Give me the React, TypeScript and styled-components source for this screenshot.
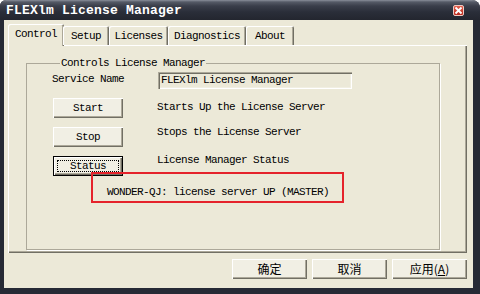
import React from "react";
import styled, { createGlobalStyle } from "styled-components";

const GlobalStyle = createGlobalStyle`
  html, body {
    margin: 0;
    padding: 0;
    width: 480px;
    height: 294px;
    overflow: hidden;
    background: #ffffff;
  }
  #root {
    width: 480px;
    height: 294px;
  }
`;

const MONO = `"Liberation Mono", "DejaVu Sans Mono", monospace`;
const CJK = `"Noto Sans CJK SC", "Noto Sans", sans-serif`;

const TABS = [
  { label: "Control", width: 56 },
  { label: "Setup", width: 46 },
  { label: "Licenses", width: 59 },
  { label: "Diagnostics", width: 78 },
  { label: "About", width: 48 },
];

const CONTROLS = [
  { button: "Start", text: "Starts Up the License Server", offset: 3 },
  { button: "Stop", text: "Stops the License Server", offset: -1 },
  { button: "Status", text: "License Manager Status", offset: -2, isDefault: true },
];

export default function App() {
  return (
    <>
      <GlobalStyle />
      <Window>
        <TitleBar>
          <Title>FLEXlm License Manager</Title>
          <CloseButton>
            <svg width="9" height="9" viewBox="0 0 9 9">
              <path d="M1.5 1.5 L7.5 7.5 M7.5 1.5 L1.5 7.5" stroke="#fff" strokeWidth="1.8" />
            </svg>
          </CloseButton>
        </TitleBar>
        <Body>
          <TabStrip>
            {TABS.map((t, i) => (
              <Tab key={t.label} $active={i === 0} style={{ width: t.width }}>
                {t.label}
              </Tab>
            ))}
          </TabStrip>
          <TabPanel>
            <GroupBox>
              <Legend>Controls License Manager</Legend>
              <ControlGrid>
                <FieldLabel>Service Name</FieldLabel>
                <TextBox>FLEXlm License Manager</TextBox>
                {CONTROLS.map((c) => (
                  <React.Fragment key={c.button}>
                    <PushButton $default={c.isDefault}>
                      {c.isDefault ? <FocusRing>{c.button}</FocusRing> : c.button}
                    </PushButton>
                    <Description $offset={c.offset}>{c.text}</Description>
                  </React.Fragment>
                ))}
              </ControlGrid>
              <StatusNote>WONDER-QJ: license server UP (MASTER)</StatusNote>
            </GroupBox>
          </TabPanel>
          <DialogButtons>
            <DialogButton>确定</DialogButton>
            <DialogButton>取消</DialogButton>
            <DialogButton>
              应用(<u>A</u>)
            </DialogButton>
          </DialogButtons>
        </Body>
      </Window>
    </>
  );
}

const Window = styled.div`
  width: 480px;
  height: 294px;
  box-sizing: border-box;
  display: flex;
  flex-direction: column;
  background: #262a35;
  border-radius: 6px 8px 0 0;
  overflow: hidden;
`;

const TitleBar = styled.div`
  height: 20px;
  flex: none;
  display: flex;
  align-items: center;
  justify-content: space-between;
  padding: 0 16px 0 6px;
  background: linear-gradient(#8a8f9a 0, #555a66 2px, #3a3e4a 6px, #2a2e39 12px, #23262f 20px);
`;

const Title = styled.div`
  font-family: ${MONO};
  font-weight: bold;
  font-size: 13px;
  letter-spacing: 0.2px;
  color: #ffffff;
  margin-top: 1px;
`;

const CloseButton = styled.div`
  width: 11px;
  height: 11px;
  margin-top: 1px;
  box-sizing: border-box;
  border: 1px solid #f0c8c0;
  border-radius: 2px;
  background: linear-gradient(#e2604e, #b8261a);
  display: flex;
  align-items: center;
  justify-content: center;
`;

const Body = styled.div`
  flex: 1;
  margin: 0 7px 6px 4px;
  padding: 4px 6px 0 4px;
  background: #ece9d8;
  display: flex;
  flex-direction: column;
  font-family: ${MONO};
  font-size: 11px;
  letter-spacing: -0.6px;
  color: #000;
`;

const TabStrip = styled.div`
  height: 21px;
  display: flex;
  align-items: flex-end;
  padding-left: 2px;
  position: relative;
  z-index: 1;
`;

const Tab = styled.div<{ $active?: boolean }>`
  box-sizing: border-box;
  height: ${(p) => (p.$active ? 22 : 19)}px;
  margin-bottom: ${(p) => (p.$active ? -1 : 0)}px;
  margin-left: ${(p) => (p.$active ? -2 : 0)}px;
  margin-right: ${(p) => (p.$active ? -1 : 0)}px;
  display: flex;
  align-items: center;
  justify-content: center;
  padding-bottom: ${(p) => (p.$active ? 2 : 0)}px;
  background: #ece9d8;
  border-radius: 2px 2px 0 0;
  box-shadow: inset 1px 1px #ffffff, inset -1px 0 #716f64, inset -2px 0 #aca899;
`;

const TabPanel = styled.div`
  height: 208px;
  box-sizing: border-box;
  display: flex;
  padding: 12px 27px 3px 18px;
  box-shadow: inset 1px 1px #ffffff, inset -1px -1px #716f64, inset -2px -2px #aca899;
`;

const GroupBox = styled.fieldset`
  flex: 1;
  position: relative;
  margin: 0;
  min-width: 0;
  padding: 3px 0 0 26px;
  border: 1px solid #aca899;
  box-shadow: 1px 1px 0 #ffffff;
`;

const Legend = styled.legend`
  margin-left: 7px;
  padding: 0 1px;
  line-height: 12px;
`;

const ControlGrid = styled.div`
  display: grid;
  grid-template-columns: 70px 1fr;
  grid-template-rows: 17px 20px 20px 20px;
  column-gap: 34px;
  row-gap: 9px;
`;

const FieldLabel = styled.div`
  display: flex;
  justify-content: center;
  white-space: nowrap;
  line-height: 17px;
  margin-top: -1px;
`;

const TextBox = styled.div`
  width: 194px;
  height: 17px;
  box-sizing: border-box;
  margin-left: 1px;
  padding: 2px 0 0 3px;
  line-height: 13px;
  background: #ece9d8;
  box-shadow: inset 1px 1px #aca899, inset 2px 2px #716f64, inset -1px -1px #ffffff, inset -2px -2px #f1efe2;
`;

const PushButton = styled.button<{ $default?: boolean }>`
  width: 70px;
  height: 20px;
  padding: 0;
  display: flex;
  align-items: center;
  justify-content: center;
  font: inherit;
  letter-spacing: inherit;
  color: #000;
  background: #f1efe4;
  border: ${(p) => (p.$default ? "1px solid #000" : "none")};
  box-shadow: inset 1px 1px #ffffff, inset -1px -1px #716f64, inset -2px -2px #aca899;
`;

const FocusRing = styled.span`
  flex: 1;
  align-self: stretch;
  margin: 3px;
  border: 1px dotted #000;
  display: flex;
  align-items: center;
  justify-content: center;
`;

const Description = styled.div<{ $offset: number }>`
  align-self: start;
  white-space: nowrap;
  line-height: 12px;
  margin-top: ${(p) => p.$offset}px;
`;

const StatusNote = styled.div`
  position: absolute;
  left: 64px;
  top: 103px;
  width: 253px;
  height: 31px;
  box-sizing: border-box;
  border: 2px solid #e5232b;
  padding: 12px 0 0 14px;
  line-height: 12px;
  white-space: nowrap;
`;

const DialogButtons = styled.div`
  display: flex;
  justify-content: flex-end;
  gap: 5px;
  margin-top: 6px;
`;

const DialogButton = styled.button`
  width: 75px;
  height: 20px;
  padding: 0;
  border: none;
  font-family: ${CJK};
  font-size: 12px;
  letter-spacing: 0;
  line-height: 20px;
  color: #000;
  background: #f1efe4;
  box-shadow: inset 1px 1px #ffffff, inset -1px -1px #716f64, inset -2px -2px #aca899;
  u {
    text-underline-offset: 1px;
  }
`;
